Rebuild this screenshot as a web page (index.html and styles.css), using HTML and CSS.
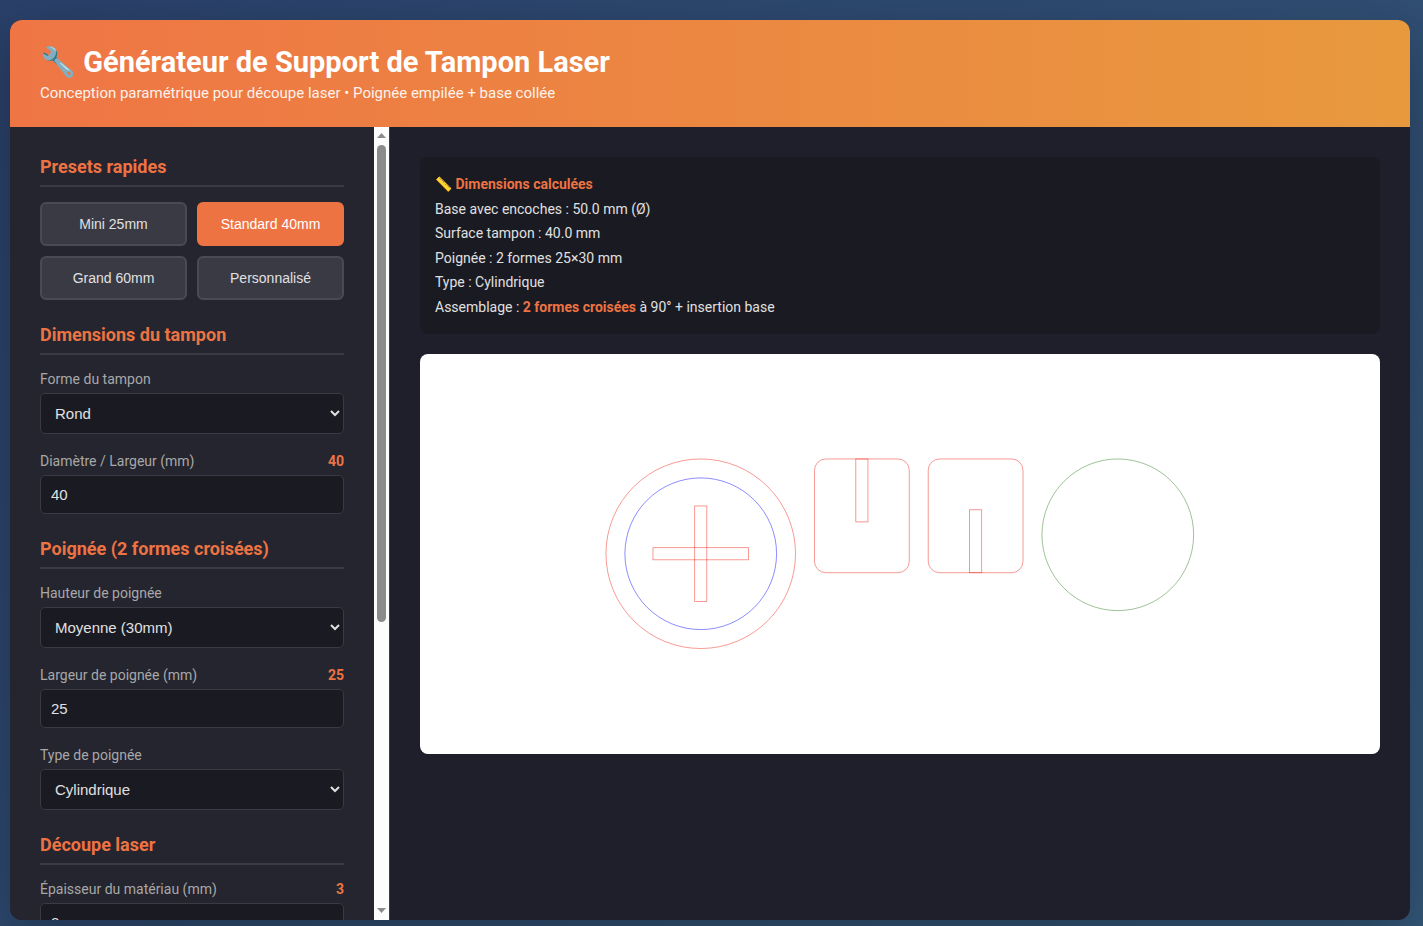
FILE: index.html
```html
<!DOCTYPE html>
<html lang="fr">
<head>
<meta charset="utf-8">
<title>Générateur de Support de Tampon Laser</title>
<link rel="stylesheet" href="styles.css">
</head>
<body>
<div class="container">
  <header class="header">
    <h1>🔧 Générateur de Support de Tampon Laser</h1>
    <p>Conception paramétrique pour découpe laser • Poignée empilée + base collée</p>
  </header>
  <div class="content">
    <aside class="sidebar">
      <div class="controls">
        <section class="section">
          <h2>Presets rapides</h2>
          <div class="presets">
            <button type="button" class="preset">Mini 25mm</button>
            <button type="button" class="preset active">Standard 40mm</button>
            <button type="button" class="preset">Grand 60mm</button>
            <button type="button" class="preset">Personnalisé</button>
          </div>
        </section>
        <section class="section">
          <h2>Dimensions du tampon</h2>
          <div class="field">
            <label for="shape">Forme du tampon</label>
            <select id="shape"><option>Rond</option></select>
          </div>
          <div class="field">
            <label for="diameter">Diamètre / Largeur (mm) <span class="value">40</span></label>
            <input id="diameter" type="number" value="40">
          </div>
        </section>
        <section class="section">
          <h2>Poignée (2 formes croisées)</h2>
          <div class="field">
            <label for="handle-height">Hauteur de poignée</label>
            <select id="handle-height"><option>Moyenne (30mm)</option></select>
          </div>
          <div class="field">
            <label for="handle-width">Largeur de poignée (mm) <span class="value">25</span></label>
            <input id="handle-width" type="number" value="25">
          </div>
          <div class="field">
            <label for="handle-type">Type de poignée</label>
            <select id="handle-type"><option>Cylindrique</option></select>
          </div>
        </section>
        <section class="section">
          <h2>Découpe laser</h2>
          <div class="field">
            <label for="thickness">Épaisseur du matériau (mm) <span class="value">3</span></label>
            <input id="thickness" type="number" value="3">
          </div>
        </section>
      </div>
      <div class="scrollbar" aria-hidden="true">
        <svg class="arrow" viewBox="0 0 15 17"><path d="M7.5 6 L12 11 H3 Z"/></svg>
        <div class="track"><div class="thumb"></div></div>
        <svg class="arrow" viewBox="0 0 15 17"><path d="M7.5 10 L12 5 H3 Z"/></svg>
      </div>
    </aside>
    <main class="main">
      <div class="info">
        <strong>📏 Dimensions calculées</strong><br>
        Base avec encoches : 50.0 mm (Ø)<br>
        Surface tampon : 40.0 mm<br>
        Poignée : 2 formes 25×30 mm<br>
        Type : Cylindrique<br>
        Assemblage : <strong>2 formes croisées</strong> à 90° + insertion base
      </div>
      <div class="preview">
        <svg class="drawing" viewBox="0 0 165 60" role="img" aria-label="Plan de découpe">
          <g class="cut">
            <circle cx="30" cy="30" r="25"/>
            <rect x="17.4" y="28.4" width="25.2" height="3.2"/>
            <rect x="28.4" y="17.4" width="3.2" height="25.2"/>
            <rect x="60" y="5" width="25" height="30" rx="3"/>
            <rect x="70.9" y="5" width="3.2" height="16.6"/>
            <rect x="90" y="5" width="25" height="30" rx="3"/>
            <rect x="100.9" y="18.4" width="3.2" height="16.6"/>
          </g>
          <circle class="engrave" cx="30" cy="30" r="20"/>
          <circle class="stamp" cx="140" cy="25" r="20"/>
        </svg>
      </div>
    </main>
  </div>
</div>
</body>
</html>
```
FILE: styles.css
```css
* { box-sizing: border-box; margin: 0; padding: 0; }

body {
  display: flex;
  height: 100vh;
  padding: 20px 13px 6px 10px;
  overflow: hidden;
  background: linear-gradient(135deg, #2a4069 0%, #34587a 100%);
  color: #e0e0e0;
  font-family: Roboto, sans-serif;
}

.container {
  display: flex;
  flex: 1;
  flex-direction: column;
  min-width: 0;
  overflow: hidden;
  border-radius: 12px;
  background: #1f1f2b;
  box-shadow: 0 20px 60px rgba(0, 0, 0, 0.3);
}

.header {
  padding: 25px 30px;
  background: linear-gradient(90deg, #ef7545, #e8993e);
  color: #fff;
}

.header h1 { font-size: 29px; line-height: 34px; }

.header p {
  margin-top: 5px;
  font-size: 15px;
  line-height: 18px;
  opacity: 0.9;
}

.content {
  display: grid;
  grid-template-columns: 380px 1fr;
  flex: 1;
  min-height: 0;
}

.sidebar {
  display: flex;
  min-height: 0;
  border-right: 1px solid #3a3a45;
  background: #25252f;
}

.controls {
  flex: 1;
  padding: 30px;
  overflow-y: auto;
  scrollbar-width: none;
}

.scrollbar {
  display: flex;
  flex-direction: column;
  width: 15px;
  background: #fcfcfc;
}

.arrow { display: block; height: 17px; fill: #8b8b8b; }
.track { flex: 1; padding: 1px 3px; }
.thumb { height: 63%; border-radius: 5px; background: #8b8b8b; }

.section { margin-bottom: 25px; }

.section h2 {
  margin-bottom: 15px;
  padding-bottom: 8px;
  border-bottom: 2px solid #3a3a45;
  color: #ee7343;
  font-size: 18px;
  line-height: 20px;
}

.presets {
  display: grid;
  grid-template-columns: 1fr 1fr;
  gap: 10px;
}

.preset {
  padding: 12px;
  border: 2px solid #4a4a55;
  border-radius: 6px;
  background: #3a3a45;
  color: #e0e0e0;
  font-family: "Liberation Sans", sans-serif;
  font-size: 14px;
  line-height: 16px;
}

.preset.active {
  border-color: #ee7343;
  background: #ee7343;
  color: #fff;
}

.field { margin-bottom: 18px; }

.field label {
  display: flex;
  justify-content: space-between;
  margin-bottom: 5px;
  color: #a8a8a8;
  font-size: 14px;
  line-height: 18px;
}

.value { color: #ee7343; font-weight: bold; }

.field input,
.field select {
  display: block;
  width: 100%;
  padding: 10px;
  border: 1px solid #3a3a45;
  border-radius: 5px;
  background: #1a1a22;
  color: #e0e0e0;
  font-family: "Liberation Sans", sans-serif;
  font-size: 15px;
}

.field input { height: 39px; appearance: textfield; }
.field select { height: 41px; }

.main { min-width: 0; padding: 30px; }

.info {
  margin-bottom: 20px;
  padding: 15px;
  border-radius: 8px;
  background: #1a1a22;
  font-size: 14px;
  line-height: 1.75;
}

.info strong { color: #ee7343; }

.preview {
  display: flex;
  align-items: center;
  justify-content: center;
  height: 400px;
  padding: 20px;
  border-radius: 8px;
  background: #fff;
}

.drawing { width: 68%; height: auto; }

.drawing circle, .drawing rect { fill: none; stroke-width: 0.2; stroke-opacity: 0.6; }
.cut { stroke: #ee2211; }
.drawing .engrave { stroke: #0000ff; }
.drawing .stamp { stroke: #2a7a1a; }
```
